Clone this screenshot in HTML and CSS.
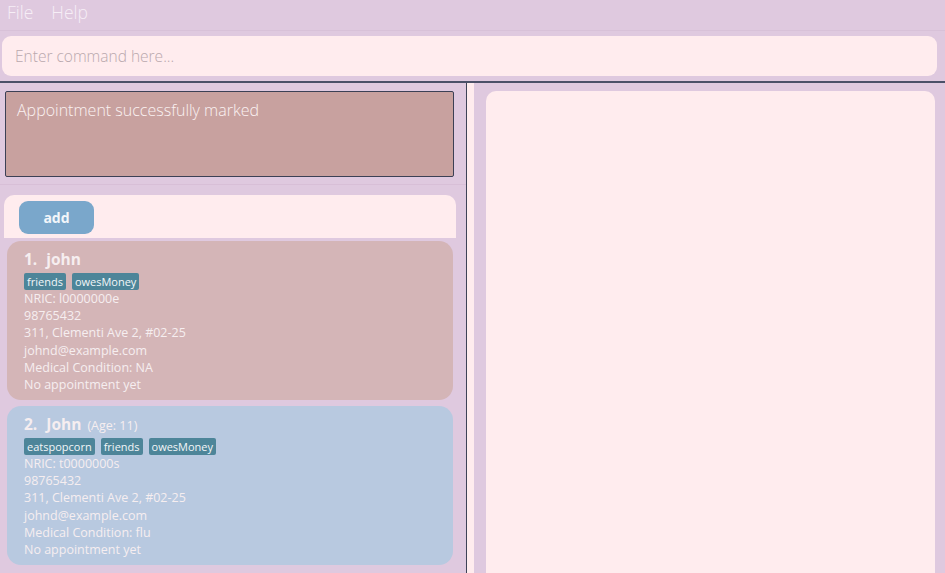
FILE: index.html
```html
<!DOCTYPE html>
<html>
<head>
<meta charset="utf-8">
<link rel="stylesheet" href="styles.css">
</head>
<body>
<div class="app">
  <div class="menubar">
    <span class="menu-item">File</span>
    <span class="menu-item">Help</span>
  </div>
  <div class="command-area">
    <div class="command-box">Enter command here...</div>
  </div>
  <div class="main">
    <div class="left">
      <div class="result-wrap">
        <div class="result">Appointment successfully marked</div>
      </div>
      <div class="list-area">
        <div class="toolbar">
          <button class="add-btn">add</button>
        </div>
        <div class="cards">
          <div class="card card-pink">
            <div class="name"><span class="idx">1.</span>john</div>
            <div class="tags"><span class="tag">friends</span><span class="tag">owesMoney</span></div>
            <div class="line">NRIC: l0000000e</div>
            <div class="line">98765432</div>
            <div class="line">311, Clementi Ave 2, #02-25</div>
            <div class="line">johnd@example.com</div>
            <div class="line">Medical Condition: NA</div>
            <div class="line">No appointment yet</div>
          </div>
          <div class="card card-blue">
            <div class="name"><span class="idx">2.</span>John<span class="age">(Age: 11)</span></div>
            <div class="tags"><span class="tag">eatspopcorn</span><span class="tag">friends</span><span class="tag">owesMoney</span></div>
            <div class="line">NRIC: t0000000s</div>
            <div class="line">98765432</div>
            <div class="line">311, Clementi Ave 2, #02-25</div>
            <div class="line">johnd@example.com</div>
            <div class="line">Medical Condition: flu</div>
            <div class="line">No appointment yet</div>
          </div>
        </div>
      </div>
    </div>
    <div class="strip"></div>
    <div class="right">
      <div class="panel"></div>
    </div>
  </div>
</div>
</body>
</html>
```
FILE: styles.css
```css
* { box-sizing: border-box; }
html, body {
  margin: 0;
  padding: 0;
}
body {
  width: 945px;
  height: 573px;
  overflow: hidden;
  background: #dfc9df;
  font-family: "Open Sans", "Noto Sans", sans-serif;
}
.app {
  display: flex;
  flex-direction: column;
  height: 573px;
}
.menubar {
  height: 31px;
  display: flex;
  align-items: center;
  gap: 18px;
  padding-left: 7px;
  border-bottom: 1px solid #d8c1d8;
  padding-bottom: 6px;
}
.menu-item {
  color: #f6eef6;
  font-size: 17.5px;
  font-weight: 300;
}
.command-area {
  padding: 5px 8px 5px 2px;
  border-bottom: 2px solid #4b5068;
}
.command-box {
  height: 40px;
  background: #ffecee;
  border-radius: 9px;
  padding-left: 13px;
  display: flex;
  align-items: center;
  font-size: 15.5px;
  font-weight: 300;
  color: #b9a8ad;
}
.main {
  flex: 1;
  display: flex;
  min-height: 0;
}
.left {
  width: 467px;
  border-right: 1px solid #3e4256;
  display: flex;
  flex-direction: column;
}
.result-wrap {
  padding: 8px 12px 0 5px;
  height: 102px;
  border-bottom: 1px solid #d8bfd7;
}
.result {
  height: 86px;
  background: #c8a19f;
  border: 1px solid #3c4055;
  border-radius: 2px;
  color: #fbf2f2;
  font-size: 16px;
  font-weight: 300;
  padding: 7px 11px;
}
.list-area {
  padding: 10px 10px 0 4px;
}
.toolbar {
  background: #ffecee;
  border-radius: 10px 10px 0 0;
  height: 43px;
  padding: 6px 15px;
}
.add-btn {
  width: 75px;
  height: 33px;
  border: none;
  border-radius: 9px;
  background: #7aa7cb;
  color: #f2f6fa;
  font-family: "Open Sans", "Noto Sans", sans-serif;
  font-weight: 700;
  font-size: 14px;
  padding: 0;
}
.cards {
  display: flex;
  flex-direction: column;
  gap: 6px;
  padding: 3px 3px 0 3px;
}
.card {
  height: 159px;
  border-radius: 14px;
  padding: 7px 17px;
  color: #f6eef0;
}
.card-pink { background: #d4b5b7; }
.card-blue { background: #b8c9e0; }
.name {
  font-size: 15.5px;
  font-weight: 700;
  height: 23px;
  display: flex;
  align-items: baseline;
}
.idx { margin-right: 9px; }
.age {
  font-size: 12.5px;
  font-weight: 400;
  margin-left: 6px;
}
.tags {
  display: flex;
  gap: 6px;
  margin-top: 2px;
}
.tag {
  background: #4d8599;
  color: #f2f6f8;
  font-size: 11px;
  height: 17px;
  line-height: 17px;
  padding: 0 3px;
  border-radius: 2px;
}
.line {
  font-size: 12.5px;
  line-height: 17.2px;
}
.strip {
  width: 7px;
  background: #ffecee;
}
.right {
  flex: 1;
  padding: 8px 10px 0 12px;
}
.panel {
  height: 100%;
  background: #ffecee;
  border-radius: 10px 10px 0 0;
}
```
